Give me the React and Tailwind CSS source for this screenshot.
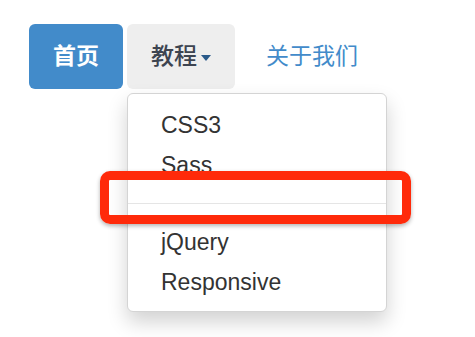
const items = ['CSS3', 'Sass']
const items2 = ['jQuery', 'Responsive']

const MenuItem = ({ children }) => (
  <li className="h-[40px] flex items-center px-[33px] text-[23px] text-[#333333]">{children}</li>
)

export default function App() {
  return (
    <div
      className="relative w-[475px] h-[337px] bg-white overflow-hidden pt-[24px] pl-[29px]"
      style={{ fontFamily: '"Liberation Sans", Arial, "Noto Sans CJK SC", sans-serif' }}
    >
      <ul className="flex items-start gap-[4px]">
        <li>
          <a className="h-[65px] px-[24px] flex items-center rounded-[6px] bg-[#428bca] text-white text-[23px] font-semibold">
            首页
          </a>
        </li>
        <li className="relative">
          <a className="h-[65px] px-[24px] flex items-center rounded-[6px] bg-[#eeeeee] text-[#3d4450] text-[23px] font-medium">
            教程
            <span className="ml-[4px] mt-[2px] w-0 h-0 border-l-[5px] border-r-[5px] border-t-[6px] border-l-transparent border-r-transparent border-t-[#2a5a8a]"></span>
          </a>
          {/* dropdown menu */}
          <ul className="absolute left-0 top-full mt-[4px] w-[260px] pt-[11px] pb-[9px] bg-white border border-[#d4d4d4] rounded-[6px] shadow-[0_10px_20px_rgba(0,0,0,0.18)]">
            {items.map((t) => (
              <MenuItem key={t}>{t}</MenuItem>
            ))}
            <li className="h-px bg-[#e5e5e5] my-[18px]"></li>
            {items2.map((t) => (
              <MenuItem key={t}>{t}</MenuItem>
            ))}
          </ul>
        </li>
        <li className="ml-[3px]">
          <a className="h-[65px] px-[24px] flex items-center text-[#428bca] text-[23px]">关于我们</a>
        </li>
      </ul>

      {/* highlight annotation */}
      <div className="absolute left-[100px] top-[171px] w-[311px] h-[53px] border-[9px] border-[#ff2a0a] rounded-[10px] shadow-[0_2px_4px_rgba(0,0,0,0.3)]"></div>
    </div>
  )
}
